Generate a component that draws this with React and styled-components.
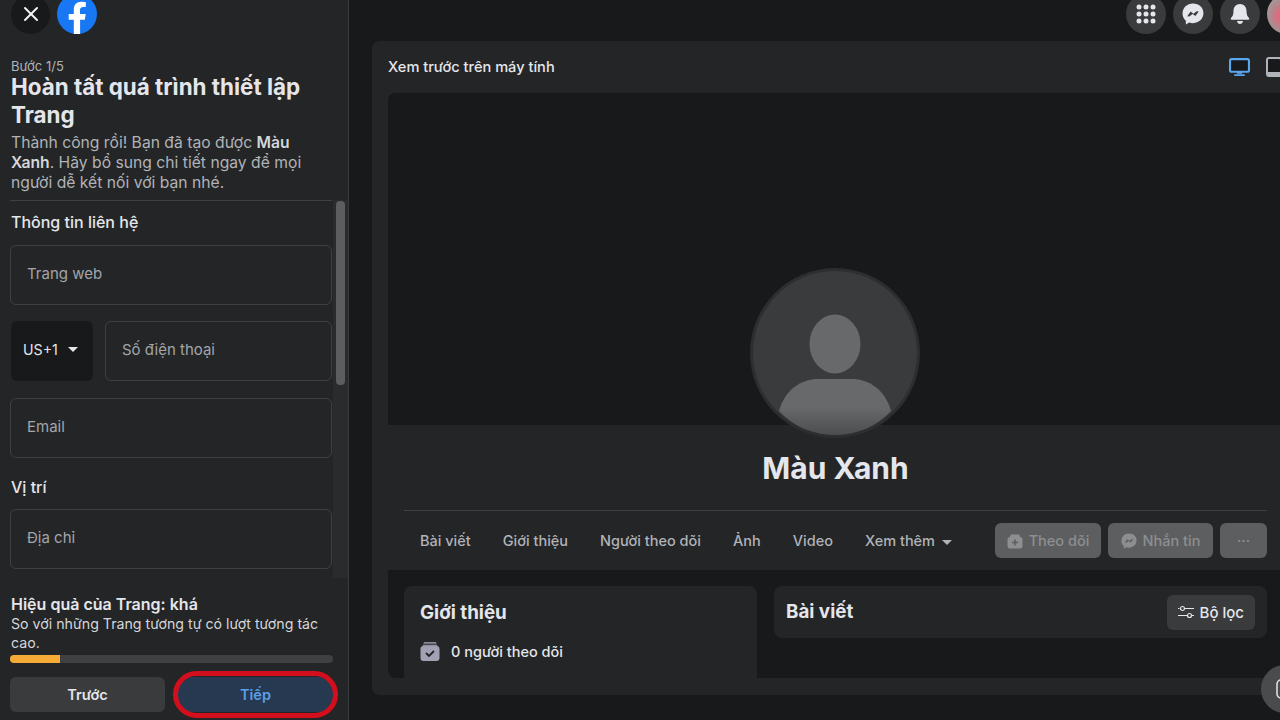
import React from "react";
import styled, { createGlobalStyle } from "styled-components";
import { X } from "lucide-react";

const FONT = `Inter, "Noto Sans", "Liberation Sans", sans-serif`;

const GlobalStyle = createGlobalStyle`
  html, body {
    margin: 0;
    padding: 0;
    background: #18191a;
    font-family: ${FONT};
  }
  * { box-sizing: border-box; }
`;

const TABS = ["Bài viết", "Giới thiệu", "Người theo dõi", "Ảnh", "Video"];

const FbLogo = () => (
  <svg width="40" height="40" viewBox="0 0 40 40">
    <circle cx="20" cy="20" r="20" fill="#1877f2" />
    <path
      d="M27.8 25.8 28.7 20H23v-3.8c0-1.6.8-3.1 3.300-3.100h2.500V8.200s-2.300-.4-4.500-.4c-4.600 0-7.500 2.800-7.500 7.800V20h-5.100v5.800h5.100V40a20 20 0 0 0 6.300 0V25.800z"
      fill="#fff"
    />
  </svg>
);

const GridIcon = () => (
  <svg width="20" height="20" viewBox="0 0 20 20" fill="#e4e6eb">
    {[3, 10, 17].map((y) =>
      [3, 10, 17].map((x) => <circle key={`${x}-${y}`} cx={x} cy={y} r="2.500" />)
    )}
  </svg>
);

const MessengerIcon = ({ size = 20, fill = "#e4e6eb", stroke = "#3a3b3c" }) => (
  <svg width={size} height={size} viewBox="0 0 20 20">
    <path
      d="M10 .5C4.600.5.500 4.400.500 9.600c0 2.700 1.100 5 3 6.600v3.300l3.100-1.700c1.100.3 2.200.5 3.400.5 5.400 0 9.500-3.900 9.500-9.100S15.400.5 10 .5z"
      fill={fill}
    />
    <path
      d="M4.800 12l3-4.300 2.600 2 3-2.300 1.800.3-3 4.200-2.600-2-3 2.300z"
      fill={stroke}
    />
  </svg>
);

const BellIcon = () => (
  <svg width="20" height="22" viewBox="0 0 20 22" fill="#e4e6eb">
    <path d="M10 1C6 1 3.500 4 3.500 8c0 4-1 5.500-2.500 7-.6.700-.2 1.800.8 1.800h16.400c1 0 1.400-1.100.8-1.800-1.500-1.500-2.500-3-2.500-7 0-4-2.500-7-6.500-7z" />
    <path d="M7 18h6c-.3 1.800-1.500 3-3 3s-2.700-1.200-3-3z" />
  </svg>
);

const DesktopIcon = () => (
  <svg width="21" height="19" viewBox="0 0 20 18">
    <rect x="1" y="1" width="18" height="12" rx="1.500" fill="#18191a" stroke="#5aa7f0" strokeWidth="2" />
    <path d="M7.500 13h5v2h-5zM5 15.500h10V17H5z" fill="#5aa7f0" />
  </svg>
);

const TabletIcon = () => (
  <svg width="16" height="20" viewBox="0 0 16 20">
    <rect x="1" y="1" width="14" height="18" rx="2" fill="#18191a" stroke="#b0b3b8" strokeWidth="2" />
    <rect x="1" y="15" width="14" height="4" fill="#b0b3b8" />
  </svg>
);

const AvatarFigure = () => (
  <svg width="170" height="170" viewBox="0 0 170 170">
    <defs>
      <linearGradient id="bodyFade" x1="0" y1="0" x2="0" y2="1">
        <stop offset="0" stopColor="#68696b" />
        <stop offset="0.5" stopColor="#68696b" />
        <stop offset="1" stopColor="#4c4d4f" />
      </linearGradient>
    </defs>
    <circle cx="85" cy="85" r="85" fill="#2d2e30" />
    <circle cx="85" cy="85" r="82" fill="#3a3b3d" />
    <ellipse cx="85" cy="76" rx="25.500" ry="29.500" fill="#68696b" />
    <path
      d="M29 143c6-22 23-32 39-32h34c16 0 33 10 39 32-14 15-34 24-56 24s-42-9-56-24z"
      fill="url(#bodyFade)"
    />
  </svg>
);

const FollowIcon = () => (
  <svg width="16" height="16" viewBox="0 0 16 16">
    <path d="M4 1.500h8l1.500 3h-11z" fill="#8d8e90" />
    <rect x="0.500" y="4" width="15" height="11.500" rx="2.500" fill="#8d8e90" />
    <path d="M8 6.500v6M5 9.500h6" stroke="#5d5e60" strokeWidth="1.600" />
  </svg>
);

const FollowersIcon = () => (
  <svg width="20" height="20" viewBox="0 0 20 20">
    <path d="M4 1h12l1.500 4h-15z" fill="#8a8b9c" />
    <path d="M3 3.200h14" stroke="#2b2c2e" strokeWidth="1" />
    <rect x="0.500" y="5" width="19" height="15" rx="3" fill="#a0a1b2" />
    <path d="M6 12l3 3 5-5" fill="none" stroke="#222326" strokeWidth="1.800" />
  </svg>
);

const FilterIcon = () => (
  <svg width="16" height="14" viewBox="0 0 16 14" fill="none" stroke="#e4e6eb" strokeWidth="1.200">
    <path d="M0 3.500h1.500M7 3.500h9M0 10.500h9M14 10.500h2" />
    <circle cx="4.500" cy="3.500" r="2" />
    <circle cx="11.500" cy="10.500" r="2" />
  </svg>
);

const App = () => (
  <>
    <GlobalStyle />
    <Screen>
      <Sidebar>
        <SidebarTop>
          <CloseButton>
            <X size={24} color="#f0f2f5" strokeWidth={2} />
          </CloseButton>
          <FbLogo />
        </SidebarTop>

        <SidebarHead>
          <StepLabel>Bước 1/5</StepLabel>
          <SetupTitle>Hoàn tất quá trình thiết lập Trang</SetupTitle>
          <SetupText>
            Thành công rồi! Bạn đã tạo được <b>Màu Xanh</b>. Hãy bổ sung chi
            tiết ngay để mọi người dễ kết nối với bạn nhé.
          </SetupText>
        </SidebarHead>

        <FormScroll>
          <FormBody>
            <FormHeading>Thông tin liên hệ</FormHeading>
            <Field>Trang web</Field>
            <PhoneRow>
              <CountrySelect>
                US+1 <Caret />
              </CountrySelect>
              <Field>Số điện thoại</Field>
            </PhoneRow>
            <Field>Email</Field>
            <FormHeading $spaced>Vị trí</FormHeading>
            <Field>Địa chỉ</Field>
          </FormBody>
          <ScrollTrack>
            <ScrollThumb />
          </ScrollTrack>
        </FormScroll>

        <SidebarFooter>
          <ScoreTitle>Hiệu quả của Trang: khá</ScoreTitle>
          <ScoreText>So với những Trang tương tự có lượt tương tác cao.</ScoreText>
          <ProgressTrack>
            <ProgressFill style={{ width: "15.500%" }} />
          </ProgressTrack>
          <ButtonRow>
            <BackButton>Trước</BackButton>
            <NextButton>
              Tiếp
              <RedRing />
            </NextButton>
          </ButtonRow>
        </SidebarFooter>
      </Sidebar>

      <Main>
        <TopBar>
          <RoundIcon><GridIcon /></RoundIcon>
          <RoundIcon><MessengerIcon size={22} /></RoundIcon>
          <RoundIcon><BellIcon /></RoundIcon>
          <UserPhoto />
        </TopBar>

        <PreviewPanel>
          <PreviewHeader>
            <PreviewTitle>Xem trước trên máy tính</PreviewTitle>
            <DeviceIcons>
              <DesktopIcon />
              <TabletIcon />
            </DeviceIcons>
          </PreviewHeader>

          <PreviewFrame>
            <Cover />
            <ProfileBar>
              <AvatarWrap>
                <AvatarFigure />
              </AvatarWrap>
              <ProfileName>Màu Xanh</ProfileName>
              <TabRow>
                <Tabs>
                  {TABS.map((tab) => (
                    <Tab key={tab}>{tab}</Tab>
                  ))}
                  <Tab>
                    Xem thêm <Caret $light />
                  </Tab>
                </Tabs>
                <Actions>
                  <ActionButton $w="106px">
                    <FollowIcon /> Theo dõi
                  </ActionButton>
                  <ActionButton $w="105px">
                    <MessengerIcon size={16} fill="#8d8e90" stroke="#5d5e60" /> Nhắn tin
                  </ActionButton>
                  <ActionButton $w="47px">···</ActionButton>
                </Actions>
              </TabRow>
            </ProfileBar>

            <CardsArea>
              <IntroCard>
                <CardTitle>Giới thiệu</CardTitle>
                <FollowerRow>
                  <FollowersIcon />
                  0 người theo dõi
                </FollowerRow>
              </IntroCard>
              <PostsCard>
                <CardTitle>Bài viết</CardTitle>
                <FilterButton>
                  <FilterIcon /> Bộ lọc
                </FilterButton>
              </PostsCard>
            </CardsArea>
          </PreviewFrame>
        </PreviewPanel>

        <FloatingButton>
          <svg width="20" height="20" viewBox="0 0 20 20" fill="none" stroke="#e4e6eb" strokeWidth="1.500">
            <rect x="1" y="1" width="18" height="18" rx="4" />
          </svg>
        </FloatingButton>
      </Main>
    </Screen>
  </>
);

const Screen = styled.div`
  display: flex;
  width: 1280px;
  height: 720px;
  overflow: hidden;
  background: #18191a;
  color: #e4e6eb;
`;

const Sidebar = styled.aside`
  flex: 0 0 348px;
  height: 720px;
  display: flex;
  flex-direction: column;
  background: #242526;
  border-right: 1px solid #393a3b;
`;

const SidebarTop = styled.div`
  display: flex;
  align-items: center;
  gap: 7px;
  height: 40px;
  margin-top: -6px;
  padding-left: 11px;
  flex-shrink: 0;
`;

const CloseButton = styled.div`
  width: 39px;
  height: 39px;
  border-radius: 50%;
  background: #18191a;
  display: flex;
  align-items: center;
  justify-content: center;
`;

const SidebarHead = styled.div`
  padding: 25px 22px 0 11px;
`;

const StepLabel = styled.div`
  font-size: 13px;
  line-height: 14px;
  color: #b0b3b8;
`;

const SetupTitle = styled.h1`
  margin: 0;
  font-size: 22.400px;
  line-height: 28px;
  font-weight: 700;
  color: #e4e6eb;
`;

const SetupText = styled.p`
  margin: 4px 0 0;
  font-size: 15.700px;
  line-height: 20px;
  color: #b0b3b8;

  b {
    font-weight: 600;
    color: #d4d6da;
  }
`;

const FormScroll = styled.div`
  flex: 1;
  min-height: 0;
  display: flex;
  margin-top: 7px;
  overflow: hidden;
`;

const FormBody = styled.div`
  width: 322px;
  margin-left: 10px;
  border-top: 1px solid #3e4042;
  flex-shrink: 0;
`;

const FormHeading = styled.h2`
  margin: ${(props) => (props.$spaced ? "18px 0 11px 1px" : "10px 0 12px 1px")};
  font-size: 16px;
  line-height: 22px;
  font-weight: 500;
  color: #e4e6eb;
`;

const Field = styled.div`
  flex: 1;
  height: 60px;
  display: flex;
  align-items: center;
  padding: 0 16px 4px;
  margin-bottom: 16px;
  border: 1px solid #3e4042;
  border-radius: 6px;
  font-size: 15px;
  color: #a2a5aa;
`;

const PhoneRow = styled.div`
  display: flex;
  gap: 12px;
  margin: 0 0 17px 1px;

  ${Field} {
    margin-bottom: 0;
  }
`;

const CountrySelect = styled.div`
  width: 82px;
  height: 60px;
  display: flex;
  align-items: center;
  justify-content: space-between;
  padding: 0 15px 4px 12px;
  background: #18191a;
  border-radius: 6px;
  font-size: 14.200px;
  color: #e4e6eb;
`;

const Caret = styled.span`
  display: inline-block;
  width: 0;
  height: 0;
  margin-left: ${(props) => (props.$light ? "3px" : "0")};
  border-left: 5px solid transparent;
  border-right: 5px solid transparent;
  border-top: 5px solid ${(props) => (props.$light ? "#b0b3b8" : "#e4e6eb")};
  vertical-align: middle;
`;

const ScrollTrack = styled.div`
  flex: 1;
  margin-left: 1px;
  padding: 1px 3px 0;
  background: #2a2b2c;
`;

const ScrollThumb = styled.div`
  height: 184px;
  border-radius: 4px;
  background: #5c5d5f;
`;

const SidebarFooter = styled.div`
  flex-shrink: 0;
  height: 142px;
  padding: 16px 15px 0 10px;
`;

const ScoreTitle = styled.div`
  margin-left: 1px;
  font-size: 16px;
  line-height: 20px;
  font-weight: 600;
  color: #e4e6eb;
`;

const ScoreText = styled.div`
  margin-left: 1px;
  font-size: 14.200px;
  line-height: 19px;
  color: #d4d6da;
`;

const ProgressTrack = styled.div`
  height: 8px;
  margin-top: 3px;
  border-radius: 4px;
  background: #3e4042;
  overflow: hidden;
`;

const ProgressFill = styled.div`
  height: 100%;
  background: #f5ab35;
`;

const ButtonRow = styled.div`
  display: flex;
  gap: 13px;
  margin-top: 14px;
`;

const BackButton = styled.div`
  width: 155px;
  height: 35px;
  display: flex;
  align-items: center;
  justify-content: center;
  border-radius: 6px;
  background: #3a3b3c;
  font-size: 14.500px;
  font-weight: 600;
  color: #e4e6eb;
`;

const NextButton = styled(BackButton)`
  position: relative;
  background: #263951;
  color: #5b9fe6;
`;

const RedRing = styled.span`
  position: absolute;
  top: -6px;
  left: -5px;
  right: -5px;
  bottom: -6px;
  border: 5px solid #d20f1c;
  border-radius: 26px;
`;

const Main = styled.main`
  position: relative;
  flex: 1;
  min-width: 0;
  padding-left: 23px;
`;

const TopBar = styled.div`
  display: flex;
  justify-content: flex-end;
  align-items: center;
  gap: 7px;
  height: 40px;
  margin: -6px -27px 7px 0;
`;

const RoundIcon = styled.div`
  width: 40px;
  height: 40px;
  border-radius: 50%;
  background: #3a3b3c;
  display: flex;
  align-items: center;
  justify-content: center;
`;

const UserPhoto = styled.div`
  width: 40px;
  height: 40px;
  border-radius: 50%;
  background: radial-gradient(circle at 45% 55%, #e06a80 0 22%, #a88f90 50%, #b5aca8 100%);
`;

const PreviewPanel = styled.section`
  width: 909px;
  height: 654px;
  padding: 0 0 17px 16px;
  background: #242526;
  border-radius: 8px 0 0 8px;
  display: flex;
  flex-direction: column;
`;

const PreviewHeader = styled.div`
  height: 52px;
  flex-shrink: 0;
  display: flex;
  align-items: center;
  justify-content: space-between;
`;

const PreviewTitle = styled.div`
  font-size: 14.600px;
  font-weight: 500;
  color: #e4e6eb;
`;

const DeviceIcons = styled.div`
  display: flex;
  align-items: center;
  gap: 16px;
  margin-right: -1px;
`;

const PreviewFrame = styled.div`
  flex: 1;
  min-height: 0;
  display: flex;
  flex-direction: column;
  background: #18191a;
  border-radius: 8px 0 0 8px;
  overflow: hidden;
`;

const Cover = styled.div`
  height: 332px;
  flex-shrink: 0;
  background: #18191a;
`;

const ProfileBar = styled.div`
  position: relative;
  height: 145px;
  flex-shrink: 0;
  padding: 0 14px 0 16px;
  background: #242526;
`;

const AvatarWrap = styled.div`
  position: absolute;
  top: -157px;
  left: 362px;
  width: 170px;
  height: 170px;
`;

const ProfileName = styled.div`
  padding-top: 24px;
  height: 85px;
  text-align: center;
  font-size: 30px;
  line-height: 38px;
  font-weight: 700;
  color: #e4e6eb;
`;

const TabRow = styled.div`
  display: flex;
  align-items: center;
  justify-content: space-between;
  height: 60px;
  border-top: 1px solid #3e4042;
`;

const Tabs = styled.div`
  display: flex;
  gap: 32px;
  padding-left: 16px;
`;

const Tab = styled.div`
  font-size: 14.500px;
  font-weight: 500;
  color: #b0b3b8;
  white-space: nowrap;
`;

const Actions = styled.div`
  display: flex;
  gap: 7px;
`;

const ActionButton = styled.div`
  width: ${(props) => props.$w};
  height: 35px;
  display: flex;
  align-items: center;
  justify-content: center;
  gap: 6px;
  border-radius: 6px;
  background: #5d5e60;
  font-size: 14.500px;
  font-weight: 500;
  color: #8d8e90;
  white-space: nowrap;
`;

const CardsArea = styled.div`
  flex: 1;
  display: flex;
  align-items: flex-start;
  gap: 17px;
  padding: 16px 14px 0 16px;
`;

const CardBase = styled.div`
  background: #242526;
  border-radius: 8px;
`;

const IntroCard = styled(CardBase)`
  width: 353px;
  height: 120px;
  padding: 15px 16px;
`;

const PostsCard = styled(CardBase)`
  flex: 1;
  height: 52px;
  display: flex;
  align-items: center;
  justify-content: space-between;
  padding: 0 12px;
`;

const CardTitle = styled.div`
  font-size: 18.800px;
  line-height: 24px;
  font-weight: 700;
  color: #e4e6eb;
`;

const FollowerRow = styled.div`
  display: flex;
  align-items: center;
  gap: 11px;
  margin-top: 16px;
  font-size: 14.500px;
  font-weight: 500;
  color: #e4e6eb;
`;

const FilterButton = styled.div`
  display: flex;
  align-items: center;
  gap: 6px;
  height: 35px;
  padding: 0 11px;
  border-radius: 6px;
  background: #3a3b3c;
  font-size: 15px;
  font-weight: 500;
  color: #e4e6eb;
`;

const FloatingButton = styled.div`
  position: absolute;
  top: 665px;
  left: 912px;
  width: 48px;
  height: 48px;
  border-radius: 50%;
  background: #4a4b4d;
  display: flex;
  align-items: center;
  padding-left: 15px;
`;

export default App;
